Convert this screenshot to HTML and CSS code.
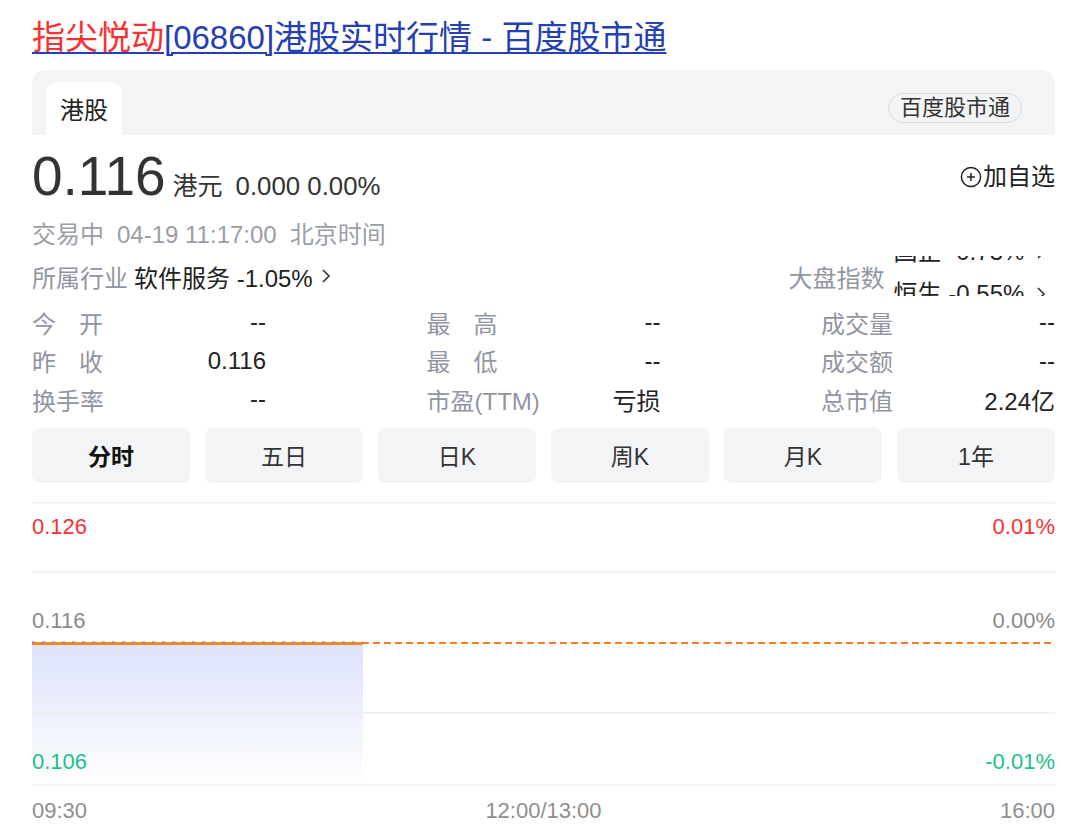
FILE: index.html
```html
<!DOCTYPE html>
<html lang="zh-CN">
<head>
<meta charset="utf-8">
<title>指尖悦动[06860]港股实时行情 - 百度股市通</title>
<link rel="stylesheet" href="styles.css">
</head>
<body>
<div class="page">
  <h1 class="title"><a href="#"><span class="hl">指尖悦动</span>[06860]港股实时行情 - 百度股市通</a></h1>
  <div class="card">
    <div class="tabs">
      <div class="tab">港股</div>
      <div class="pill">百度股市通</div>
    </div>

    <div class="price-row">
      <span class="price">0.116</span>
      <span class="cur">港元</span>
      <span class="chg">0.000 0.00%</span>
      <span class="fav">
        <svg class="fav-ico" viewBox="0 0 22 22" width="22" height="22"><circle cx="11" cy="11" r="9.6" fill="none" stroke="#222" stroke-width="1.5"/><path d="M11 7v8M7 11h8" stroke="#222" stroke-width="1.5" fill="none"/></svg>加自选
      </span>
    </div>

    <div class="time-row"><span>交易中</span><span>04-19 11:17:00</span><span>北京时间</span></div>

    <div class="ind-row">
      <div class="ind">
        <span class="lbl">所属行业</span>
        <span class="val">软件服务 -1.05%</span>
        <svg class="chev" viewBox="0 0 10 16" width="10" height="16"><path d="M2 2l6 6-6 6" fill="none" stroke="#333" stroke-width="1.6"/></svg>
      </div>
      <div class="idx">
        <span class="lbl">大盘指数</span>
        <div class="ticker">
          <div class="ticker-inner">
            <div class="tick">国企 -0.73% <svg class="chev" viewBox="0 0 10 16" width="10" height="16"><path d="M2 2l6 6-6 6" fill="none" stroke="#333" stroke-width="1.6"/></svg></div>
            <div class="tick">恒生 -0.55% <svg class="chev" viewBox="0 0 10 16" width="10" height="16"><path d="M2 2l6 6-6 6" fill="none" stroke="#333" stroke-width="1.6"/></svg></div>
          </div>
        </div>
      </div>
    </div>

    <div class="stats">
      <div class="stat"><span class="k j">今开</span><span class="v">--</span></div>
      <div class="stat"><span class="k j">最高</span><span class="v">--</span></div>
      <div class="stat"><span class="k">成交量</span><span class="v">--</span></div>
      <div class="stat"><span class="k j">昨收</span><span class="v">0.116</span></div>
      <div class="stat"><span class="k j">最低</span><span class="v">--</span></div>
      <div class="stat"><span class="k">成交额</span><span class="v">--</span></div>
      <div class="stat"><span class="k">换手率</span><span class="v">--</span></div>
      <div class="stat"><span class="k">市盈(TTM)</span><span class="v">亏损</span></div>
      <div class="stat"><span class="k">总市值</span><span class="v">2.24亿</span></div>
    </div>

    <div class="periods">
      <div class="btn active">分时</div>
      <div class="btn">五日</div>
      <div class="btn">日K</div>
      <div class="btn">周K</div>
      <div class="btn">月K</div>
      <div class="btn">1年</div>
    </div>

    <div class="chart">
      <svg class="chart-svg" viewBox="0 0 1023 285" width="1023" height="285">
        <defs>
          <linearGradient id="fillg" x1="0" y1="0" x2="0" y2="1">
            <stop offset="0" stop-color="#dce2fa"/>
            <stop offset="1" stop-color="#ffffff"/>
          </linearGradient>
        </defs>
        <rect x="0" y="143" width="331" height="141" fill="url(#fillg)"/>
        <line x1="0" y1="1.7" x2="1023" y2="1.7" stroke="#f0f0f0" stroke-width="1.6"/>
        <line x1="0" y1="70.7" x2="1023" y2="70.7" stroke="#f0f0f0" stroke-width="1.6"/>
        <line x1="0" y1="212" x2="1023" y2="212" stroke="#eeeeee" stroke-width="1.6"/>
        <line x1="0" y1="284" x2="1023" y2="284" stroke="#f0f0f0" stroke-width="1.6"/>
        <line x1="0" y1="142" x2="1023" y2="142" stroke="#ff7a1f" stroke-width="2" stroke-dasharray="7 4"/>
        <line x1="0" y1="142.5" x2="331" y2="142.5" stroke="#f28a1c" stroke-width="3"/>
        <line x1="0" y1="141" x2="331" y2="141" stroke="#5b7cf0" stroke-width="1" stroke-dasharray="3 7"/>
      </svg>
      <span class="ylab yl1 red">0.126</span>
      <span class="ylab yl2 gray">0.116</span>
      <span class="ylab yl3 green">0.106</span>
      <span class="ylab yr1 red">0.01%</span>
      <span class="ylab yr2 gray">0.00%</span>
      <span class="ylab yr3 green">-0.01%</span>
    </div>
    <div class="xaxis"><span>09:30</span><span>12:00/13:00</span><span>16:00</span></div>
  </div>
</div>
</body>
</html>
```

FILE: styles.css
```css
* { box-sizing: border-box; }
body {
  margin: 0;
  background: #fff;
  font-family: "Liberation Sans", Arial, "Noto Sans CJK SC", sans-serif;
  color: #222;
}
.page {
  padding: 17px 25px 0 32px;
}
.title {
  margin: 0;
  font-size: 33px;
  font-weight: normal;
  line-height: 42px;
  white-space: nowrap;
}
.title a {
  color: #2440b3;
  text-decoration: underline;
  text-decoration-thickness: 2px;
  text-underline-offset: 3px;
}
.title .hl { color: #f73131; }

.card { margin-top: 11px; }

.tabs {
  display: flex;
  justify-content: space-between;
  align-items: flex-start;
  height: 65px;
  padding: 12px 33px 0 14px;
  background: #f3f4f6;
  border-radius: 14px 14px 0 0;
}
.tab {
  width: 76px;
  height: 53px;
  background: #fff;
  border-radius: 10px 10px 0 0;
  display: flex;
  align-items: center;
  justify-content: center;
  font-size: 24px;
  color: #222;
}
.pill {
  margin-top: 11px;
  height: 30px;
  padding: 0 11px;
  border: 1px solid #d8d9dd;
  border-radius: 16px;
  font-size: 22px;
  line-height: 28px;
  color: #333;
}

.price-row {
  display: flex;
  align-items: baseline;
  margin-top: 14px;
}
.price {
  font-size: 55px;
  line-height: 55px;
  color: #333;
}
.cur {
  font-size: 25px;
  line-height: 24px;
  margin-left: 7px;
  color: #333;
}
.chg {
  font-size: 25.8px;
  line-height: 24px;
  margin-left: 13px;
  color: #333;
}
.fav {
  margin-left: auto;
  align-self: center;
  display: flex;
  align-items: center;
  font-size: 24px;
  line-height: 30px;
  color: #222;
}
.fav-ico { margin-right: 1px; }

.time-row {
  display: flex;
  gap: 13px;
  margin-top: 11px;
  font-size: 24px;
  line-height: 40px;
  color: #9a9ea7;
}

.ind-row {
  display: flex;
  justify-content: space-between;
  align-items: center;
  height: 42px;
}
.ind, .idx {
  display: flex;
  align-items: center;
  font-size: 24px;
}
.lbl { color: #9195a3; }
.val { color: #222; margin-left: 6px; }
.ind .chev { margin-left: 8px; }
.ticker {
  height: 40px;
  overflow: hidden;
  margin-left: 9px;
  padding-right: 9px;
}
.ticker-inner { margin-top: -25px; }
.tick {
  display: flex;
  align-items: center;
  height: 42px;
  line-height: 42px;
  color: #222;
  white-space: pre;
}
.tick .chev { margin-left: 5px; }

.stats {
  display: grid;
  grid-template-columns: 234px 234px 234px;
  justify-content: space-between;
  margin-top: 6px;
}
.stat {
  display: flex;
  justify-content: space-between;
  align-items: center;
  height: 38.5px;
  font-size: 24px;
}
.k { color: #9195a3; white-space: nowrap; }
.k.j { width: 71px; text-align: justify; text-align-last: justify; }
.v { color: #222; }

.periods {
  display: grid;
  grid-template-columns: repeat(6, 1fr);
  gap: 15px;
  margin-top: 9px;
}
.btn {
  height: 55px;
  background: #f3f4f6;
  border-radius: 8px;
  display: flex;
  align-items: center;
  justify-content: center;
  font-size: 23px;
  color: #333;
}
.btn.active { font-weight: bold; color: #111; }

.chart {
  position: relative;
  height: 285px;
  margin-top: 18px;
}
.chart-svg { display: block; }
.ylab {
  position: absolute;
  font-size: 22px;
  line-height: 24px;
}
.yl1, .yr1 { top: 14px; }
.yl2, .yr2 { top: 108px; }
.yl3, .yr3 { top: 249px; }
.yl1, .yl2, .yl3 { left: 0; }
.yr1, .yr2, .yr3 { right: 0; }
.red { color: #f73131; }
.gray { color: #8a8a8a; }
.green { color: #1bbf8c; }

.xaxis {
  display: flex;
  justify-content: space-between;
  margin-top: 13px;
  font-size: 22px;
  line-height: 24px;
  color: #8f8f8f;
}
```
